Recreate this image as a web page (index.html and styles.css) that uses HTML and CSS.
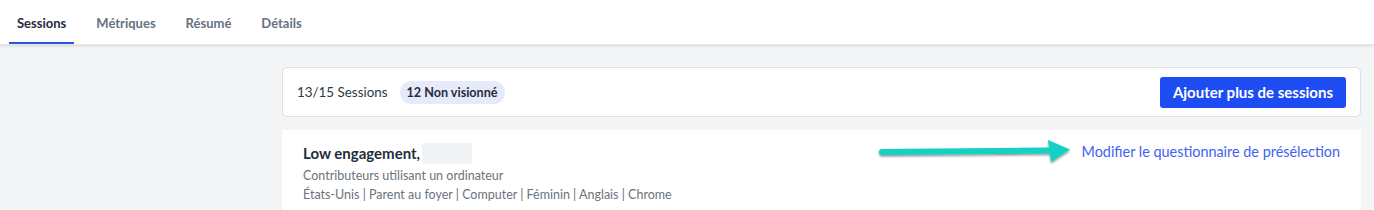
FILE: index.html
```html
<!DOCTYPE html>
<html lang="fr">
<head>
<meta charset="utf-8">
<link rel="stylesheet" href="styles.css">
</head>
<body>
<header class="topbar">
  <nav class="tabs">
    <a class="tab active">Sessions</a>
    <a class="tab">Métriques</a>
    <a class="tab">Résumé</a>
    <a class="tab">Détails</a>
  </nav>
</header>
<main class="content">
  <section class="summary">
    <div class="summary-left">
      <span class="count">13/15 Sessions</span>
      <span class="pill">12 Non visionné</span>
    </div>
    <button class="btn-primary">Ajouter plus de sessions</button>
  </section>
  <section class="card">
    <div class="card-info">
      <div class="title">Low engagement,<span class="redacted"></span></div>
      <div class="sub">Contributeurs utilisant un ordinateur</div>
      <div class="sub">États-Unis | Parent au foyer | Computer | Féminin | Anglais | Chrome</div>
    </div>
    <a class="link">Modifier le questionnaire de présélection</a>
    <svg class="arrow" width="200" height="30" viewBox="0 0 200 30">
      <defs>
        <filter id="sh" x="-10%" y="-50%" width="120%" height="200%">
          <feDropShadow dx="0" dy="1.5" stdDeviation="1.2" flood-color="#000" flood-opacity="0.45"/>
        </filter>
      </defs>
      <g filter="url(#sh)">
        <line x1="4" y1="14" x2="176" y2="12.5" stroke="#13d0c4" stroke-width="6" stroke-linecap="round"/>
        <polygon points="170,2 192,11.5 173,24" fill="#13d0c4"/>
      </g>
    </svg>
  </section>
</main>
</body>
</html>
```
FILE: styles.css
```css
* { box-sizing: border-box; }
html, body { margin: 0; padding: 0; }
body {
  background: #f3f5f6;
  font-family: Lato, "Open Sans", "Liberation Sans", sans-serif;
  color: #1f2d3d;
  width: 1374px;
  height: 210px;
  overflow: hidden;
}
.topbar {
  height: 45px;
  background: #fff;
  box-shadow: 0 1px 3px rgba(0,0,0,0.12);
  border-bottom: 1px solid #e4e7ea;
  padding-left: 9px;
  position: relative;
  z-index: 1;
}
.tabs {
  display: flex;
  gap: 14px;
  height: 44px;
}
.tab {
  padding: 4px 8px 0;
  display: flex;
  align-items: center;
  font-size: 13px;
  font-weight: 700;
  color: #66727f;
  border-bottom: 2px solid transparent;
}
.tab.active {
  color: #1f2d3d;
  border-bottom-color: #2b52e0;
}
.content {
  padding: 22px 13px 0 282px;
  display: flex;
  flex-direction: column;
  gap: 13px;
}
.summary {
  height: 50px;
  background: #fff;
  border: 1px solid #dce0e4;
  border-radius: 5px;
  display: flex;
  align-items: center;
  justify-content: space-between;
  padding: 0 14px 0 14px;
}
.summary-left {
  display: flex;
  align-items: center;
  gap: 12px;
}
.count {
  font-size: 13.4px;
  color: #2c3845;
}
.pill {
  background: #e7eafb;
  border-radius: 12px;
  height: 23px;
  display: inline-flex;
  align-items: center;
  padding: 0 7px;
  font-size: 12.6px;
  font-weight: 700;
  color: #1f2d3d;
}
.btn-primary {
  background: #1d4cf2;
  color: #fff;
  border: 0;
  border-radius: 3px;
  height: 31px;
  padding: 0 13px;
  font-family: inherit;
  font-size: 15px;
  font-weight: 700;
}
.card {
  background: #fff;
  height: 80px;
  padding: 12px 21px 0 21px;
  display: flex;
  justify-content: space-between;
  align-items: flex-start;
  position: relative;
}
.title {
  font-size: 15px;
  font-weight: 700;
  color: #1f2d3d;
  display: flex;
  align-items: center;
  height: 22px;
}
.redacted {
  display: inline-block;
  width: 50px;
  height: 21px;
  background: #f2f3f5;
  margin-left: 2px;
}
.sub {
  font-size: 12.5px;
  color: #6b737c;
  margin-top: 4px;
  line-height: 15px;
}
.link {
  font-size: 14.4px;
  color: #3d63f2;
  margin-top: 1px;
}
.arrow {
  position: absolute;
  left: 596px;
  top: 8px;
}
```
